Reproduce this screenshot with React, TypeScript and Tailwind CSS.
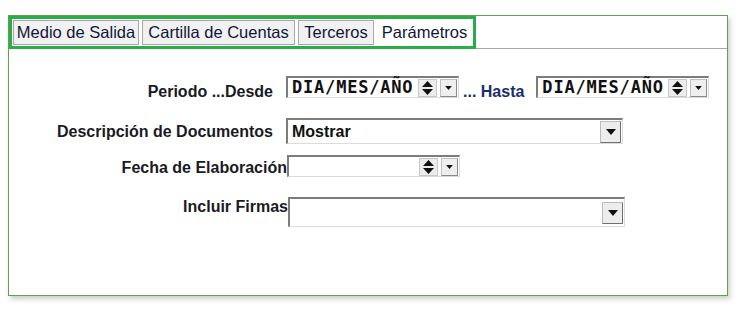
import React from 'react';

const tabs = [
  { label: 'Medio de Salida', w: 'w-[126px]', active: false },
  { label: 'Cartilla de Cuentas', w: 'w-[153px]', active: false },
  { label: 'Terceros', w: 'w-[76px]', active: false },
  { label: 'Parámetros', w: 'w-[95px]', active: true },
];

function Spinner() {
  return (
    <div className="flex h-[18px] w-[19px] flex-col items-center justify-center gap-[2px] border border-[#c8c8c8] bg-[#ececec]">
      <svg width="11" height="6" viewBox="0 0 11 6"><path d="M5.5 0L11 6H0z" fill="#111" /></svg>
      <svg width="11" height="6" viewBox="0 0 11 6"><path d="M0 0h11L5.5 6z" fill="#111" /></svg>
    </div>
  );
}

function DropButton({ big }: { big?: boolean }) {
  return (
    <div
      className={
        big
          ? 'flex h-[22px] w-[21px] items-center justify-center border border-[#bdbdbd] border-b-[#6f6f6f] border-r-[#6f6f6f] bg-[#ededed]'
          : 'flex h-[18px] w-[17px] items-center justify-center border border-[#c0c0c0] border-b-[#8a8a8a] border-r-[#8a8a8a] bg-[#efefef]'
      }
    >
      <svg width={big ? 10 : 7} height={big ? 6 : 4} viewBox="0 0 10 6"><path d="M0 0h10L5 6z" fill="#111" /></svg>
    </div>
  );
}

function DateBox({ text }: { text?: string }) {
  return (
    <div className="flex h-[22px] w-[173px] items-center border-l-2 border-t-2 border-[#7c7c7c] border-b border-r border-b-[#dcdcdc] border-r-[#dcdcdc] bg-white pl-[4px] pr-[1px]">
      <span className="flex-1 font-['DejaVu_Sans_Mono',monospace] text-[17px] font-bold leading-none tracking-[0.8px] text-[#111]">
        {text ?? ''}
      </span>
      <Spinner />
      <div className="w-[3px]" />
      <DropButton />
    </div>
  );
}

function SelectBox({ text, tall }: { text?: string; tall?: boolean }) {
  return (
    <div
      className={
        'flex w-[337px] items-center border-l-2 border-t-2 border-[#7c7c7c] border-b border-r border-b-[#dcdcdc] border-r-[#dcdcdc] bg-white pl-[4px] pr-[1px] ' +
        (tall ? 'h-[30px]' : 'h-[26px]')
      }
    >
      <span className="flex-1 text-[16px] font-bold text-[#111]">{text ?? ''}</span>
      <DropButton big />
    </div>
  );
}

export default function App() {
  return (
    <div className="h-[314px] w-[742px] bg-white pl-[8px] pt-[15px] font-['Liberation_Sans',Arial,sans-serif]">
      <div className="flex h-[281px] w-[720px] flex-col border border-[#6b9a52] shadow-[2px_3px_5px_rgba(90,120,80,0.35)]">
        {/* tab strip */}
        <div className="flex">
          <div className="flex gap-[3px] border-[3px] border-[#2aad48] p-[1px]">
            {tabs.map((t) => (
              <div
                key={t.label}
                className={
                  'flex h-[25px] items-center justify-center border text-[16.5px] text-[#10163a] ' +
                  t.w +
                  (t.active ? ' border-white bg-white' : ' border-[#a8a8a8] bg-[#f1f1f1]')
                }
              >
                {t.label}
              </div>
            ))}
          </div>
          <div className="flex-1 border-b border-[#a9a9a9]" />
        </div>

        {/* form */}
        <div className="flex flex-col pt-[27px] text-[16px] font-bold leading-[16px] text-[#1a1a24]">
          <div className="flex h-[22px] items-start">
            <div className="mt-[8px] w-[264px] text-right">Periodo ...Desde</div>
            <div className="ml-[13px]">
              <DateBox text="DIA/MES/AÑO" />
            </div>
            <div className="ml-[4px] mt-[8px] text-[#1b2d6b]">... Hasta</div>
            <div className="ml-[12px]">
              <DateBox text="DIA/MES/AÑO" />
            </div>
          </div>

          <div className="mt-[20px] flex h-[26px] items-start">
            <div className="mt-[6px] w-[264px] text-right">Descripción de Documentos</div>
            <div className="ml-[13px]">
              <SelectBox text="Mostrar" />
            </div>
          </div>

          <div className="mt-[11px] flex h-[23px] items-start">
            <div className="mt-[5px] w-[278px] whitespace-nowrap text-right">Fecha de Elaboración</div>
            <DateBox />
          </div>

          <div className="mt-[19px] flex h-[30px] items-start">
            <div className="mt-[2px] w-[279px] whitespace-nowrap text-right">Incluir Firmas</div>
            <SelectBox tall />
          </div>
        </div>
      </div>
    </div>
  );
}
